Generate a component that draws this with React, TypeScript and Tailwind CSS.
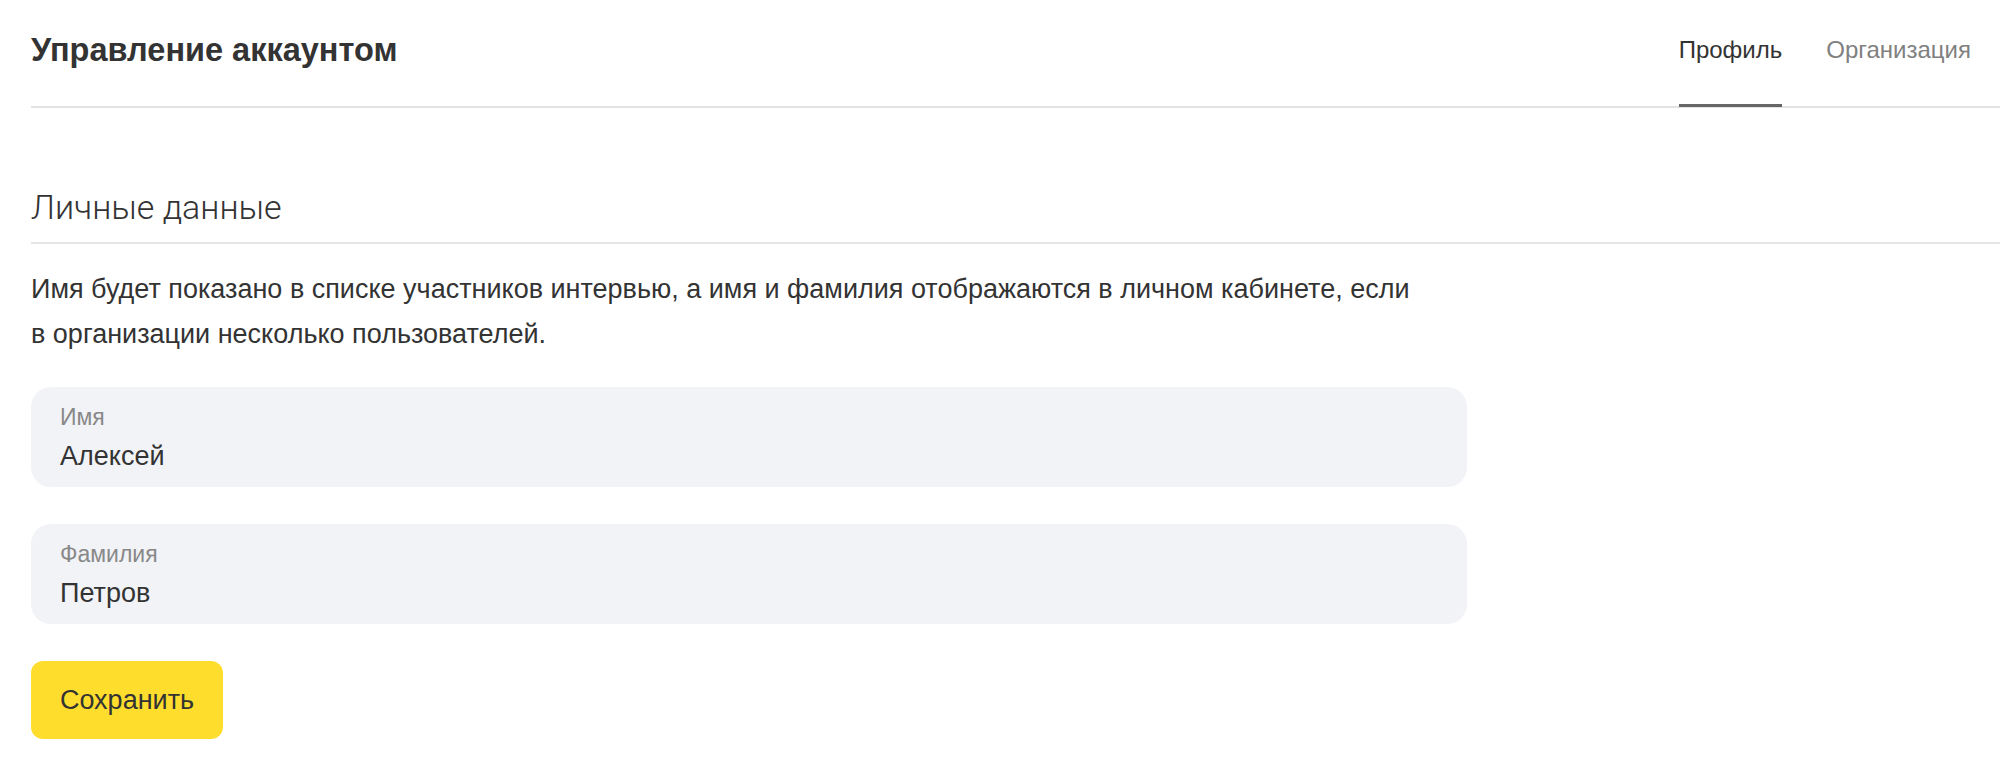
import { useState } from "react";

type Tab = "profile" | "org";

const sans = "font-['Liberation_Sans',Arial,sans-serif]";

function Field({ label, value }: { label: string; value: string }) {
  return (
    <div className="h-[100px] w-[1436px] rounded-[20px] bg-[#f2f3f7] px-[29px] pt-[17px]">
      <div className="text-[23px] leading-[26px] text-[#888]">{label}</div>
      <div className="mt-[10px] text-[27px] leading-[32px] text-[#333]">{value}</div>
    </div>
  );
}

export default function App() {
  const [tab, setTab] = useState<Tab>("profile");

  return (
    <div className={`min-h-screen bg-white text-[#333] ${sans}`}>
      {/* Header */}
      <header className="ml-[31px] flex h-[108px] items-start justify-between border-b-2 border-[#e3e3e3] pr-[29px]">
        <h1 className="pt-[30px] text-[32.5px] font-bold leading-[40px]">Управление аккаунтом</h1>
        <nav className="flex gap-[44px]">
          {[
            { id: "profile" as Tab, label: "Профиль" },
            { id: "org" as Tab, label: "Организация" },
          ].map((t) => (
            <button
              key={t.id}
              type="button"
              onClick={() => setTab(t.id)}
              className="flex h-[106px] flex-col"
            >
              <span
                className={`pt-[35px] text-[24px] leading-[30px] ${
                  tab === t.id ? "text-[#333]" : "text-[#808080]"
                }`}
              >
                {t.label}
              </span>
              <span
                className={`mt-auto h-[3px] w-full translate-y-[1px] ${
                  tab === t.id ? "bg-[#666]" : "bg-transparent"
                }`}
              />
            </button>
          ))}
        </nav>
      </header>

      {/* Personal data */}
      <section className="pl-[31px]">
        <h2 className="mt-[79px] border-b-2 border-[#e6e6e6] pb-[15px] font-['Roboto',sans-serif] text-[34px] font-light leading-[40px]">
          Личные данные
        </h2>
        <p className="mt-[23px] text-[27px] leading-[45px]">
          Имя будет показано в списке участников интервью, а имя и фамилия отображаются в личном кабинете, если
          <br />
          в организации несколько пользователей.
        </p>

        <div className="mt-[30px] flex flex-col gap-[37px]">
          <Field label="Имя" value="Алексей" />
          <Field label="Фамилия" value="Петров" />
          <button
            type="button"
            className="h-[78px] w-[192px] rounded-[12px] bg-[#ffdd2d] text-[27px] text-[#333]"
          >
            Сохранить
          </button>
        </div>
      </section>
    </div>
  );
}
